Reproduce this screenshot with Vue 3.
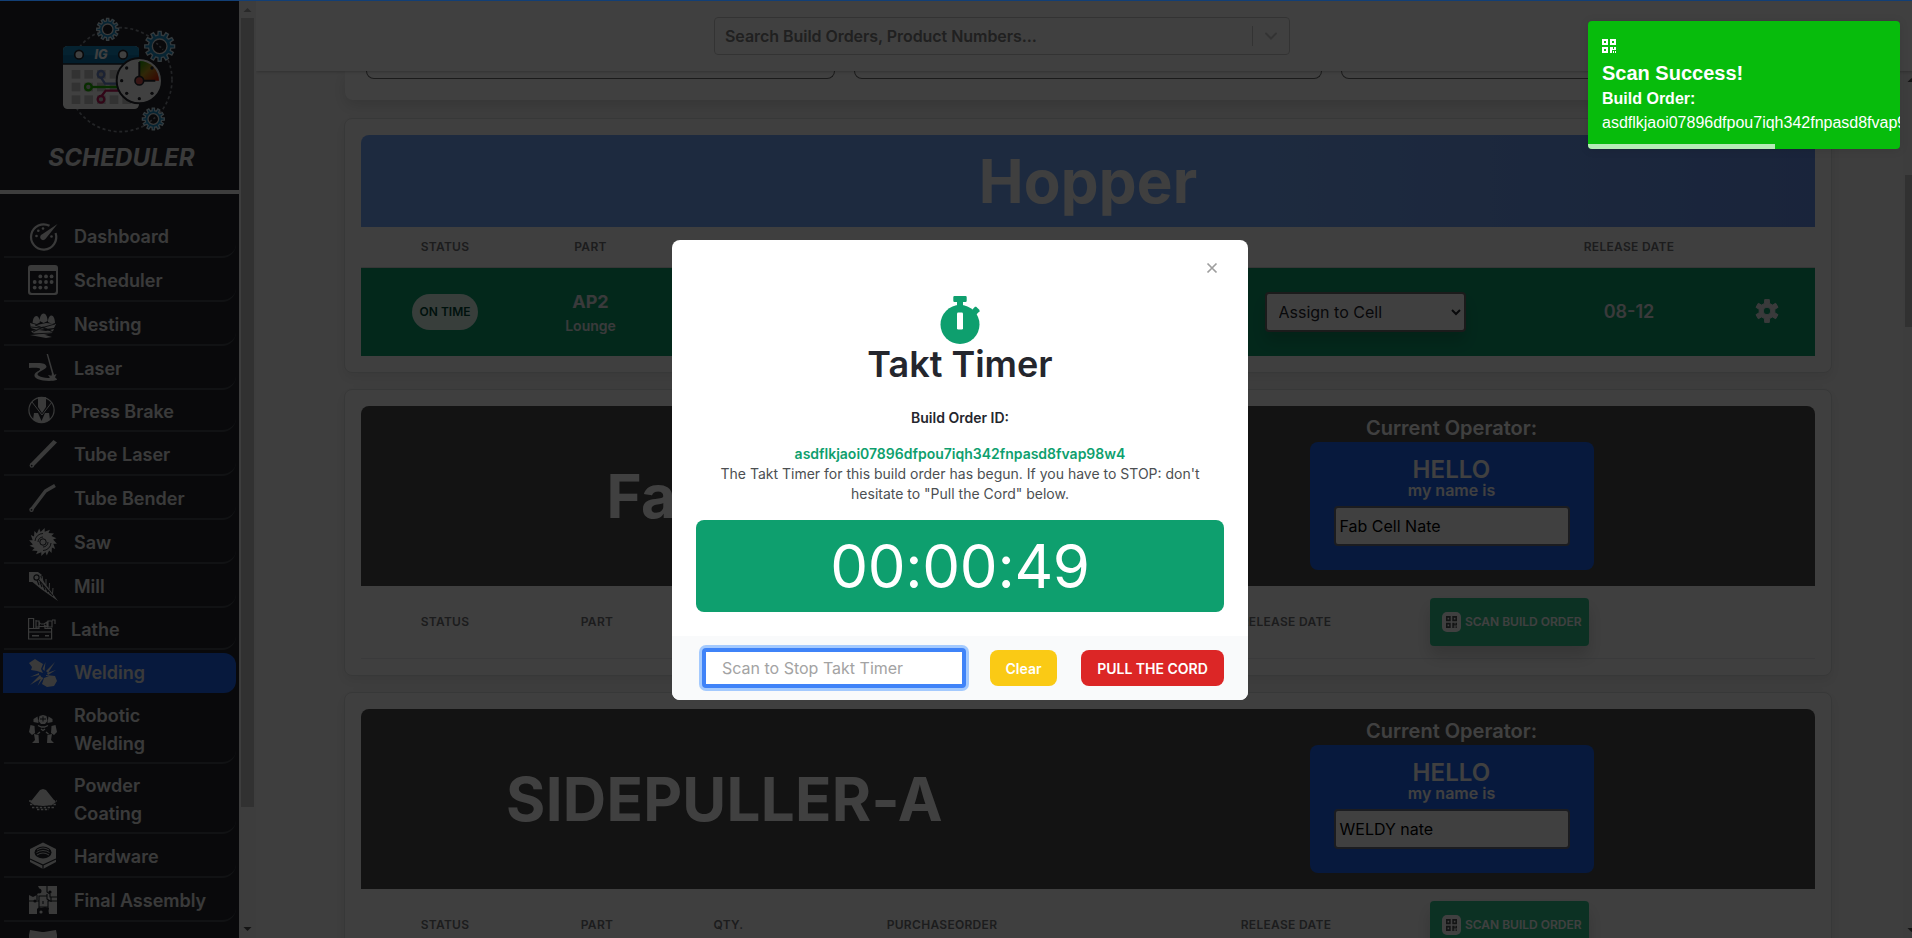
<script setup>
function gear(cx, cy, teeth, outer, inner) {
  const step = (Math.PI * 2) / teeth
  const pt = (r, a) => `${(cx + r * Math.cos(a)).toFixed(1)} ${(cy + r * Math.sin(a)).toFixed(1)}`
  const parts = []
  for (let i = 0; i < teeth; i++) {
    const a = i * step - Math.PI / 2
    parts.push(pt(inner, a - step * 0.3), pt(outer, a - step * 0.19), pt(outer, a + step * 0.19), pt(inner, a + step * 0.3))
  }
  return 'M' + parts.join('L') + 'Z'
}

function blade() {
  const parts = []
  const n = 16
  for (let i = 0; i < n; i++) {
    const a = (i * Math.PI * 2) / n
    const b = a + 0.12
    parts.push(`${(14 + 14 * Math.cos(b)).toFixed(1)} ${(14 + 14 * Math.sin(b)).toFixed(1)}`)
    parts.push(`${(14 + 10.4 * Math.cos(a + 0.16)).toFixed(1)} ${(14 + 10.4 * Math.sin(a + 0.16)).toFixed(1)}`)
  }
  return 'M' + parts.join('L') + 'Z'
}

const cogs = [
  { x: 323, y: 88, teeth: 12, outer: 33, inner: 25, hole: 16 },
  { x: 479, y: 139, teeth: 12, outer: 45, inner: 34, hole: 22 },
  { x: 460, y: 357, teeth: 12, outer: 33, inner: 25, hole: 16 },
]
const hours = [[380, 204], [456, 204], [365, 242], [380, 280], [456, 280], [418, 296]]
const squares = []
for (let r = 0; r < 3; r++) for (let c = 0; c < 5; c++) squares.push([215 + c * 38, 210 + r * 38])

const nav = [
  { label: 'Dashboard', icon: '<path d="M20.5 3.8A12.6 12.6 0 1 0 26.6 11" fill="none" stroke="currentColor" stroke-width="2.2"/><path d="M28.5 2 16.8 16.6a3 3 0 1 1-3.6-4.3z"/><circle cx="7.5" cy="14" r="1.3"/><circle cx="9.3" cy="8.7" r="1.3"/><circle cx="14" cy="6.5" r="1.3"/><circle cx="22.5" cy="14.5" r="1.3"/>' },
  { label: 'Scheduler', icon: '<path fill-rule="evenodd" d="M2-1h24q3 0 3 3v24q0 3-3 3H2q-3 0-3-3V2q0-3 3-3zM1 5v20q0 2 2 2h22q2 0 2-2V5z"/><g><circle cx="11.3" cy="10.4" r="1.9"/><circle cx="17" cy="10.4" r="1.9"/><circle cx="22.6" cy="10.4" r="1.9"/><circle cx="5.7" cy="16" r="1.9"/><circle cx="11.3" cy="16" r="1.9"/><circle cx="17" cy="16" r="1.9"/><circle cx="22.6" cy="16" r="1.9"/><circle cx="5.7" cy="21.6" r="1.9"/><circle cx="11.3" cy="21.6" r="1.9"/><circle cx="17" cy="21.6" r="1.9"/></g>' },
  { label: 'Nesting', icon: '<path d="M3.7 13c0-4 1.6-7 3.7-7s3.300 3 3.500 6.500l-3 1.500zM10.600 11c0-4 1.800-7.500 4-7.500s4 3.500 4 7.500l-4 2zM19 12c0-4 1.600-6.500 3.500-6.500S26 9 26 13l-3 1z"/><path d="M1 13l7 2 9-2 10 1-2 4-9 1-8 1-6-2z M2 21l8-1 7 1 8-2-2 4-8 2-10-1z M1 25l12-1 10 3-6 1z"/><path d="M2 17l10 1 14-4M4 22l10-5 10 5M6 15l16 6M2 24l22-1" stroke="#24262d" stroke-width="0.9" fill="none"/>' },
  { label: 'Laser', icon: '<path d="M0 9h9c5 0 8 1 8.500 3.500C18 15.500 8 17.500 8.500 20.500c.5 2.500 9 4 18.500 3.800l1 1.500c-3 1.300-9 1.500-14 .7-6-1-9-3-8.500-5.700C6 18 12 16.500 11 14.800 10 13.500 5 13.800 0 14z"/><path d="M17.600 0l6 22 1.600-.5L19 0z"/><path d="M23.500 17l1.200 4 2.800-1-1.500 3.200 2 2.300-5 .7-4.500-1.700 2.500-1-2-2.500 3.500.8z"/>' },
  { label: 'Press Brake', shift: true, icon: '<circle cx="12.500" cy="13" r="12.600" fill="none" stroke="currentColor" stroke-width="1.2"/><path d="M9 0h8v10l-4 6-4-6zM5 16h4l3.500 8 3.500-8h4l1 7q-8 5-17 0z"/><path d="M3 5l10 13L23 5" fill="none" stroke="currentColor" stroke-width="1"/>' },
  { label: 'Tube Laser', icon: '<path d="M24.500 0 28 2.500 4 27 1 24z"/><circle cx="2.800" cy="25.500" r="2.200"/><circle cx="2.700" cy="25.600" r="0.900" fill="#24262d"/>' },
  { label: 'Tube Bender', icon: '<path d="M2.500 25.500 16.500 7 26 1.500" fill="none" stroke="currentColor" stroke-width="3.400" stroke-linejoin="round"/><circle cx="2.500" cy="25.800" r="2.200"/><circle cx="2.500" cy="25.800" r="0.900" fill="#24262d"/>' },
  { label: 'Saw', icon: `<path d="${blade()}"/><circle cx="14" cy="14" r="3.200" fill="none" stroke="#24262d" stroke-width="1"/><path d="M6 13a8 8 0 0 1 8-7.500M22 15a8 8 0 0 1-8 7.500M9 14a5 5 0 0 1 5-5M19 14a5 5 0 0 1-5 5" fill="none" stroke="#24262d" stroke-width="0.900"/>` },
  { label: 'Mill', icon: '<path d="M0 0h9l4 3-8 7H0z"/><path d="M4 5l5-4 6 9 14 19L12 17 1 8z"/><circle cx="7.500" cy="5.500" r="2.600" fill="none" stroke="#24262d" stroke-width="1.200"/><path d="M13 4l1 6M17 7l0 6M20.500 11l-.3 6M24 16l-.5 6" stroke="currentColor" stroke-width="1"/><path d="M8 8l2 5M11 10l2 5M14 13l2 5M17 16l2 4M20 19l1.500 3M10 8l14 16" stroke="#24262d" stroke-width="1.100"/>' },
  { label: 'Lathe', shift: true, icon: '<g fill="none" stroke="currentColor" stroke-width="1.200"><path d="M-.4 3.500h5v10h-5zM-.4 13.500v10.500h23V13.500M0 17h23M4.600 13.500H10v-2h6v2h7M7 5v8M7 6h3v6H7M12 9h3l3-2v5l-3-2M19 6h4v6h-4zM23 5h3v4"/></g><path d="M3 20h7v1.500H3zM16 20h4v1.500h-4zM10 6.500l2 2-2 2z"/>' },
  { label: 'Welding', active: true, icon: '<path d="M0 4l6-4 3 2 5 3-2 5 2 4-6-2-6-1 1-3zM15 19l5-2 6 0 2 5-3 5-7 1-5-3z"/><path d="M13.500 10l3-7-1 9zM17 12l9-9-7 11zM18 14l9-3-8 5zM10 14l-9 4 9-2zM11 16L1 26l12-7zM12.500 18l-4 9 6-8zM17 16l9 1-9 0z"/>' },
  { label: 'Robotic Welding', two: true, icon: '<path d="M10.500 1l3.500-1 3.500 1 1 5-2.500 3h-4L9.500 6zM4.500 4l4-2.500L9.500 8l-5-1zM19.500 1.500l4 2.500v3l-5 1zM1.500 10l4 1 .5 7-3 2-3-3zM22.500 11l4-1 1.500 7-3 3-3-2zM5 19l4.500 1 .5 8H3l3-3zM18.500 20l4.500-1-1 6 3 3h-7z"/><path d="M11 4h6M14 1.500v5" stroke="#24262d" stroke-width="1"/><path d="M9 10.500l3.500 1.500h3l3.500-1.500M12 14l2 1.500 2-1.500M11 17l-2.500 2M17 17l2.500 2" fill="none" stroke="currentColor" stroke-width="1.300"/>' },
  { label: 'Powder Coating', two: true, icon: '<path d="M14 4l3 1 8 10 2 2-4 3-9 1-9-1-4-3 2-2L11 5z"/><path d="M0 16h28M1 19.500h26M3 22.500h22M8 24.500h12" stroke="currentColor" stroke-width="1.400" stroke-dasharray="2.400 1.500"/>' },
  { label: 'Hardware', icon: '<path d="M14 0.500 27 7v13l-13 7L1 20V7z"/><ellipse cx="14" cy="10.500" rx="8.500" ry="6" fill="#24262d"/><path d="M8 8q6-4 12 0M7.500 10.500q6.500-4 13 0M8 13q6-4 12 0" fill="none" stroke="currentColor" stroke-width="0.900"/><path d="M1 17l13 6 13-6M14 23v4" fill="none" stroke="#24262d" stroke-width="1.200"/>' },
  { label: 'Final Assembly', icon: '<path d="M9 0h19v28h-8l-1-3 1-3-4-1-4 1-2-1-2 2v5H0V9l4 2 4-2 1-2 3-1z"/><path d="M18 0v6l3 2v3h7M18 10h-8v5H0M10 15v6h9v-6h9M19 21v7M8 9v5M18 8v5l3 2M14 15v3M22 11v5" fill="none" stroke="#24262d" stroke-width="1.100"/><circle cx="21" cy="6" r="1.600" fill="#24262d"/><circle cx="6" cy="15" r="1.600" fill="#24262d"/><circle cx="10" cy="5" r="2.500" fill="#24262d"/><circle cx="12" cy="26" r="1.600"/>' },
  { label: 'Material', last: true, icon: '<path d="M1 0l12 2 2 0L27 0l1 5v23H0V5z"/>' },
]

const cells = [
  { title: 'Fab Cell', operator: 'Fab Cell Nate' },
  { title: 'SIDEPULLER-A', operator: 'WELDY nate' },
]
const qr = 'M0 0h6v6H0zM2 2v2h2V2zM8 0h6v6H8zM10 2v2h2V2zM0 8h6v6H0zM2 10v2h2v-2zM8 8h3v2h1V8h2v3h-4v3H8zM11 12h1v2h-1zM13 12h1v2h-1z'
const orderId = 'asdflkjaoi07896dfpou7iqh342fnpasd8fvap98w4'
</script>

<template>
  <div class="screen">
    <div class="app">
      <aside class="sidebar">
        <div class="side-content">
          <div class="brand">
            <svg class="logo" viewBox="120 30 450 390">
              <circle cx="360" cy="239" r="156" fill="none" stroke="#8b8f99" stroke-width="5" stroke-dasharray="9 8" />
              <g v-for="c in cogs" :key="c.x">
                <path :d="gear(c.x, c.y, c.teeth, c.outer, c.inner)" fill="#1c8fc8" stroke="#cfe6f2" stroke-width="4" />
                <circle :cx="c.x" :cy="c.y" :r="c.hole" fill="#24262d" stroke="#e6e6e6" stroke-width="4" />
              </g>
              <path d="M469 129l20 20M450 365l20-16" stroke="#8b8f99" stroke-width="5" stroke-dasharray="7 6" />
              <rect x="189" y="138" width="228" height="189" rx="14" fill="#fff" />
              <path d="M189 192v-40q0-14 14-14h200q14 0 14 14v40z" fill="#1687c0" />
              <path d="M189 166h228v26H189z" fill="#0d76ad" />
              <path d="M189 192h228" stroke="#24262d" stroke-width="4" />
              <circle cx="237" cy="164" r="13" fill="#fff" stroke="#24262d" stroke-width="5" />
              <circle cx="369" cy="164" r="13" fill="#fff" stroke="#24262d" stroke-width="5" />
              <text x="303" y="178" text-anchor="middle" class="logo-text">IG</text>
              <rect v-for="s in squares" :key="s.join()" :x="s[0]" :y="s[1]" width="26" height="26" fill="#c6c6c6" />
              <g fill="none" stroke-width="7">
                <path d="M303 233l12 18h40" stroke="#6d86c9" /><circle cx="303" cy="223" r="10" stroke="#6d86c9" />
                <path d="M276 261h80" stroke="#20b400" /><circle cx="265" cy="261" r="10" stroke="#20b400" />
                <path d="M305 288l12-16h40" stroke="#c2185b" /><circle cx="303" cy="298" r="10" stroke="#c2185b" />
              </g>
              <circle cx="418" cy="242" r="68" fill="#fff" stroke="#24262d" stroke-width="6" />
              <defs>
                <linearGradient id="dial" x1="0" y1="0" x2="1" y2="1">
                  <stop offset="0" stop-color="#14a000" /><stop offset=".45" stop-color="#c09a20" /><stop offset="1" stop-color="#e01000" />
                </linearGradient>
              </defs>
              <path d="M418 242v-59a59 59 0 0 1 59 59z" fill="url(#dial)" />
              <circle v-for="h in hours" :key="h.join()" :cx="h[0]" :cy="h[1]" r="5" fill="#24262d" />
              <path d="M418 186v56h48" fill="none" stroke="#24262d" stroke-width="6" />
              <circle cx="418" cy="242" r="13" fill="#d9534f" stroke="#24262d" stroke-width="5" />
            </svg>
            <div class="brand-name">SCHEDULER</div>
          </div>
          <nav class="nav">
            <a v-for="n in nav" :key="n.label" class="nav-item" :class="{ active: n.active, shift: n.shift, two: n.two, last: n.last }">
              <svg class="nav-icon" viewBox="0 0 28 28" fill="currentColor" v-html="n.icon"></svg>
              <span>{{ n.label }}</span>
            </a>
          </nav>
        </div>
        <div class="side-scroll">
          <svg width="17" height="18" viewBox="0 0 17 18"><path d="M4.500 12h8l-4-4z" fill="#a3a3a3" /></svg>
          <div class="side-thumb"></div>
          <svg class="down" width="17" height="18" viewBox="0 0 17 18"><path d="M4.500 7h8l-4 4z" fill="#505050" /></svg>
        </div>
      </aside>

      <div class="main">
        <header class="topbar">
          <div class="search">
            <span>Search Build Orders, Product Numbers...</span>
            <i class="search-line"></i>
            <svg width="20" height="20" viewBox="0 0 20 20"><path d="M5 7.500l5 5 5-5" fill="none" stroke="#ccc" stroke-width="2" stroke-linecap="round" /></svg>
          </div>
        </header>
        <div class="body">
          <div class="content">
            <section class="stats"><div></div><div></div><div></div></section>

            <section class="card hopper">
              <h2 class="hopper-title">Hopper</h2>
              <div class="hopper-grid labels">
                <span>STATUS</span><span>PART</span><span></span><span></span><span>RELEASE DATE</span><span></span>
              </div>
              <div class="hopper-grid order">
                <div><span class="pill">ON TIME</span></div>
                <div class="part"><b>AP2</b><small>Lounge</small></div>
                <div></div>
                <div><select class="assign"><option>Assign to Cell</option></select></div>
                <div class="date">08-12</div>
                <div class="settings">
                  <svg width="26" height="26" viewBox="0 0 26 26"><path fill-rule="evenodd" :d="gear(13, 13, 6, 11.6, 8) + 'M13 9.200a3.800 3.800 0 1 0 0 7.600a3.800 3.800 0 0 0 0-7.600z'" fill="#e5e7eb" stroke="#e5e7eb" stroke-width="1" stroke-linejoin="round" /></svg>
                </div>
              </div>
            </section>

            <section v-for="c in cells" :key="c.title" class="card cell">
              <div class="cell-head">
                <h2>{{ c.title }}</h2>
                <div class="operator">
                  <div class="operator-label">Current Operator:</div>
                  <div class="badge">
                    <div class="hello">HELLO</div>
                    <div class="myname">my name is</div>
                    <div class="name-box">{{ c.operator }}</div>
                  </div>
                </div>
              </div>
              <div class="cell-grid labels">
                <span>STATUS</span><span>PART</span><span>QTY.</span><span>PURCHASEORDER</span><span></span><span>RELEASE DATE</span>
                <div>
                  <button class="scan">
                    <i class="chip"><svg width="11" height="12" viewBox="0 0 14 14" preserveAspectRatio="none"><path fill-rule="evenodd" :d="qr" fill="#4c4f52" /></svg></i>
                    SCAN BUILD ORDER
                  </button>
                </div>
                <span></span>
              </div>
            </section>
          </div>
          <div class="page-scroll">
            <svg width="17" height="17" viewBox="0 0 17 17"><path d="M4.500 11h8l-4-4z" fill="#505050" /></svg>
            <div class="page-thumb"></div>
            <svg class="down" width="17" height="17" viewBox="0 0 17 17"><path d="M4.500 7h8l-4 4z" fill="#505050" /></svg>
          </div>
        </div>
      </div>
    </div>

    <div class="overlay">
      <div class="modal">
        <div class="modal-top">
          <svg width="12" height="12" viewBox="0 0 12 12"><path d="M1.500 1.500l9 9M10.500 1.500l-9 9" stroke="#9e9e9e" stroke-width="1.700" /></svg>
        </div>
        <div class="modal-body">
          <svg class="watch" width="40" height="48" viewBox="0 0 40 48">
            <g fill="#0e9f6e">
              <path d="M14.500 0h11q1.200 0 1.200 1.200v3.600q0 1.200-1.200 1.200H23v6h-6V6h-2.500q-1.200 0-1.200-1.200V1.200Q13.300 0 14.500 0z" />
              <ellipse cx="20" cy="28.500" rx="19.500" ry="19.500" />
              <path d="M31 15l4-4.300 1.200 0 3.300 3.300v1.300L35 20z" />
            </g>
            <rect x="17" y="16.500" width="6" height="17" rx="1.200" fill="#fff" />
          </svg>
          <h1>Takt Timer</h1>
          <div class="id-label">Build Order ID:</div>
          <div class="id-value">{{ orderId }}</div>
          <p>The Takt Timer for this build order has begun. If you have to STOP: don't<br />hesitate to "Pull the Cord" below.</p>
          <div class="timer">00:00:49</div>
        </div>
        <footer class="modal-foot">
          <div class="stop-input">Scan to Stop Takt Timer</div>
          <button class="clear">Clear</button>
          <button class="cord">PULL THE CORD</button>
        </footer>
      </div>
    </div>

    <div class="toast">
      <svg width="14" height="14" viewBox="0 0 14 14"><path fill-rule="evenodd" :d="qr" fill="#fff" /></svg>
      <div class="toast-title">Scan Success!</div>
      <div class="toast-sub">Build Order:</div>
      <div class="toast-id">{{ orderId }}</div>
      <div class="toast-progress"></div>
    </div>
    <div class="loadbar"></div>
  </div>
</template>

<style>
html, body { margin: 0; overflow: hidden; }
</style>

<style scoped>
* { box-sizing: border-box; }
h1, h2, p { margin: 0; }
.screen { position: relative; width: 1912px; height: 938px; overflow: hidden; font-family: Inter, "Liberation Sans", sans-serif; line-height: 1.5; }
.app { display: flex; isolation: isolate; width: 1920px; height: 938px; background: #f6f6f6; }

.sidebar { display: flex; width: 256px; height: 938px; overflow: hidden; flex: none; }
.side-content { width: 239px; background: #24262d; color: #e5e6e7; }
.brand { height: 194px; border-bottom: 4px solid #f4f4f4; padding-top: 10px; }
.logo { display: block; width: 150px; height: 130px; margin-left: 40px; }
.logo-text { font: italic 800 38px Inter, sans-serif; fill: #fff; }
.brand-name { margin: 0 0 0 4px; text-align: center; font-size: 24px; line-height: 36px; font-weight: 700; font-style: italic; letter-spacing: .15px; }
.nav { padding: 20px 3px 0 4px; }
.nav-item { display: flex; align-items: center; height: 44px; padding: 3px 0 1px 25px; border-bottom: 2px solid #464950; border-bottom-right-radius: 14px; font-size: 18px; line-height: 28px; font-weight: 600; }
.nav-item span { padding-top: 2px; }
.nav-item.last span { padding-top: 4px; }
.nav-item.shift { height: 42px; padding-left: 25px; }
.nav-item.two { height: 70px; }
.nav-item.two span { width: 110px; }
.nav-item.active { height: 40px; margin: 3px 0 1px -1px; padding: 0 0 0 26px; background: #1c64f2; border: 0; border-radius: 0 12px 12px 0; }
.nav-item.active span { padding-top: 0; }
.nav-icon { width: 28px; height: 28px; margin-right: 17px; overflow: visible; flex: none; }
.shift .nav-icon { margin-right: 14px; }
.side-scroll { width: 17px; background: #f1f1f1; display: flex; flex-direction: column; align-items: center; }
.side-thumb { width: 13px; height: 789px; background: #c1c1c1; }
.down { margin-top: auto; }

.main { flex: 1; display: flex; flex-direction: column; height: 938px; overflow: hidden; }
.topbar { position: relative; z-index: 1; height: 71px; flex: none; padding-top: 17px; background: #fff; box-shadow: 0 1px 3px rgba(0, 0, 0, .22); }
.search { display: flex; align-items: center; width: 576px; height: 38px; margin: 0 0 0 458px; padding: 0 8px 0 10px; border: 1px solid #ccc; border-radius: 4px; color: #808080; font-size: 16px; font-weight: 600; letter-spacing: -.05px; }
.search-line { width: 1px; height: 20px; margin: 0 8px 0 auto; background: #ccc; }
.body { display: flex; flex: 1; min-height: 0; }
.content { width: 1647px; padding-left: 88px; overflow: hidden; flex: none; }
.stats { display: flex; gap: 19px; width: 1486px; height: 29px; margin: 0 0 18px 1px; padding: 0 21px 21px; background: #fff; border-radius: 0 0 8px 8px; box-shadow: 0 6px 14px rgba(0, 0, 0, .12); }
.stats div { flex: 1; border: 1px solid #6b6b6b; border-top: 0; border-radius: 0 0 9px 9px; }
.card { width: 1488px; padding: 16px; border: 1px solid #dcdddd; border-radius: 8px; background: #fafafa; box-shadow: 0 5px 12px rgba(0, 0, 0, .07); }
.hopper { height: 255px; margin-bottom: 16px; }
.hopper-title { height: 92px; border-radius: 8px 8px 0 0; background: linear-gradient(90deg, #76a9fa 60%, #6690ea); color: #fafafa; text-align: center; font-size: 60px; line-height: 92px; font-weight: 700; letter-spacing: .2px; }
.labels { font-size: 12px; font-weight: 600; letter-spacing: .3px; color: #707275; }
.hopper-grid { display: grid; grid-template-columns: 168px 123px 544px 338px 190px 85px; align-items: center; justify-items: center; }
.hopper .labels { height: 40px; }
.order { height: 89px; border-top: 1px solid #d5d6d7; background: #0e9f6e; color: #e5e7eb; }
.pill { display: block; width: 66px; height: 36px; border-radius: 18px; background: #def7ec; color: #014737; text-align: center; font-size: 12px; line-height: 36px; font-weight: 600; }
.part { display: flex; flex-direction: column; align-items: center; padding-top: 3px; line-height: 24px; }
.part b { font-size: 18px; }
.part small { font-size: 14px; font-weight: 600; }
.assign { display: block; width: 201px; height: 40px; padding: 0 0 0 8px; border: 2px solid #6b6b6b; border-radius: 4px; background: #fff; color: #24262d; font: 400 16px Inter, sans-serif; box-shadow: 0 10px 15px rgba(0, 0, 0, .15); }
.date { padding-bottom: 2px; font-size: 18px; font-weight: 600; }
.settings { padding-bottom: 2px; }
.settings svg { display: block; }

.cell { height: 287px; margin-bottom: 16px; }
.cell-head { display: grid; grid-template-columns: 1fr 1fr; height: 180px; border-radius: 8px 8px 0 0; background: #4c4c4c; color: #fff; text-align: center; }
.cell-head h2 { font-size: 60px; line-height: 180px; font-weight: 700; letter-spacing: .3px; }
.operator { display: flex; flex-direction: column; align-items: center; padding-top: 8px; color: #fff; }
.operator-label { font-size: 20px; line-height: 28px; font-weight: 600; }
.badge { width: 284px; height: 128px; padding-top: 16px; border-radius: 8px; background: #1c64f2; }
.hello { font-size: 24px; line-height: 24px; font-weight: 600; letter-spacing: .1px; }
.myname { font-size: 16px; line-height: 17px; font-weight: 600; }
.name-box { width: 236px; height: 40px; margin: 7px 0 0 24px; padding-left: 4px; border: 2px solid #6b7280; border-radius: 4px; background: #fff; color: #000; text-align: left; font-size: 16px; line-height: 36px; }
.cell-grid { display: grid; grid-template-columns: 168px 136px 127px 300px 108px 172px 275px 1fr; align-items: center; justify-items: center; height: 73px; border-bottom: 1px solid #e5e7eb; }
.scan { display: flex; align-items: center; gap: 4px; width: 159px; height: 48px; padding: 0 0 1px 12px; border: 0; border-radius: 4px; background: #31c48d; color: #fff; font: 600 12px Inter, sans-serif; white-space: nowrap; box-shadow: 0 10px 15px rgba(0, 0, 0, .15); }
.chip { display: flex; align-items: center; justify-content: center; width: 19px; height: 20px; border-radius: 5px; background: #fff; flex: none; }
.page-scroll { width: 17px; display: flex; flex-direction: column; align-items: center; background: #f1f1f1; }
.page-thumb { width: 13px; height: 152px; margin-top: 87px; background: #c1c1c1; }

.overlay { position: absolute; top: 0; left: 0; width: 1920px; height: 938px; display: flex; align-items: center; justify-content: center; background: rgba(0, 0, 0, .75); }
.modal { width: 576px; height: 460px; margin-top: 2px; border-radius: 8px; background: #fff; overflow: hidden; display: flex; flex-direction: column; }
.modal-top { height: 56px; display: flex; justify-content: flex-end; padding: 22px 30px 0 0; flex: none; }
.modal-body { flex: 1; padding: 0 24px; text-align: center; color: #24262d; }
.watch { display: block; margin: 0 auto; }
h1 { font-size: 36px; line-height: 40px; font-weight: 600; }
.id-label { margin-top: 24px; font-size: 14px; line-height: 20px; font-weight: 600; }
.id-value { margin-top: 15px; font-size: 14px; line-height: 21px; font-weight: 600; color: #0e9f6e; }
p { font-size: 14px; line-height: 20px; color: #4c4f52; }
.timer { height: 92px; margin-top: 16px; border-radius: 8px; background: #0e9f6e; color: #fff; font-size: 60px; line-height: 92px; letter-spacing: -.3px; }
.modal-foot { display: flex; align-items: center; height: 64px; padding: 0 24px 0 30px; background: #f9fafb; flex: none; }
.stop-input { width: 264px; height: 40px; padding-left: 16px; border: 4px solid #3f83f8; border-radius: 4px; background: #fff; box-shadow: 0 0 0 3px #a4cafe; color: #a3a3a3; font-size: 16px; line-height: 32px; }
.modal-foot button { height: 36px; padding: 0; border: 0; border-radius: 8px; color: #fff; font: 600 14px Inter, sans-serif; }
.modal-foot .clear { width: 67px; margin: 0 24px; background: #faca15; }
.modal-foot .cord { width: 143px; background: #dc2626; }

.toast { position: absolute; top: 21px; left: 1588px; width: 312px; height: 128px; padding: 18px 0 0 14px; overflow: hidden; border-radius: 4px; background: #07bc0c; color: #fff; font-family: "Liberation Sans", Arial, sans-serif; font-size: 16px; line-height: 24px; white-space: nowrap; box-shadow: 0 1px 10px rgba(0, 0, 0, .1); }
.toast svg { display: block; margin-bottom: 5px; }
.toast-title { font-size: 20px; line-height: 30px; font-weight: 700; }
.toast-sub { line-height: 22px; font-weight: 700; }
.toast-id { line-height: 25px; }
.toast-progress { position: absolute; left: 0; bottom: 0; width: 187px; height: 5px; background: rgba(255, 255, 255, .7); }
.loadbar { position: absolute; top: 0; left: 0; right: 0; height: 1px; background: #123f76; }
</style>
